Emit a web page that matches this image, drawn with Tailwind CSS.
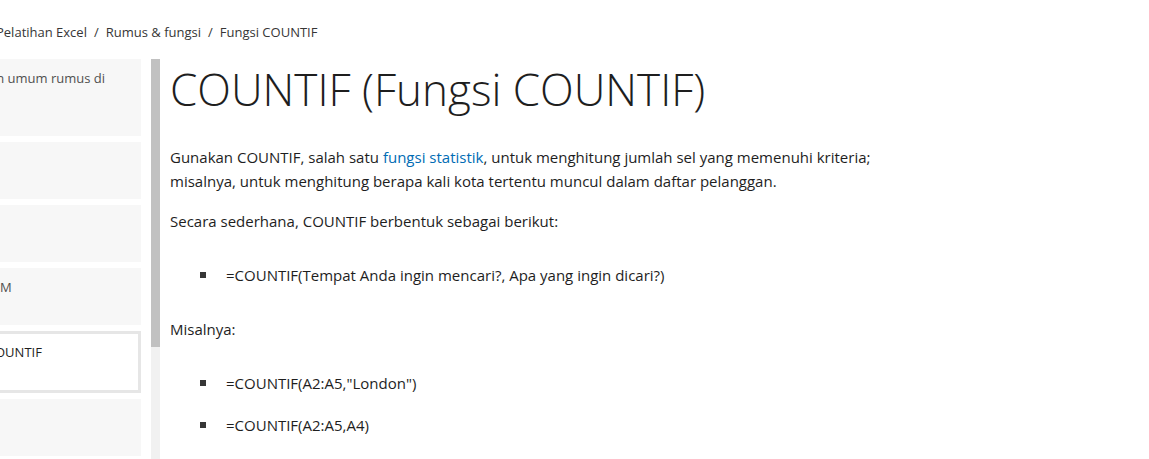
<!DOCTYPE html>
<html lang="id">
<head>
<meta charset="utf-8">
<meta name="viewport" content="width=device-width, initial-scale=1">
<title>COUNTIF (Fungsi COUNTIF)</title>
<script src="https://cdn.jsdelivr.net/npm/@tailwindcss/browser@4"></script>
</head>
<body class="flex h-screen flex-col overflow-hidden bg-white font-['Open_Sans','Noto_Sans',sans-serif] text-[15px] leading-6 text-[#1e1e1e]">
<nav aria-label="Breadcrumb" class="shrink-0 pt-[22px] pb-[17px] text-[13px] leading-5 text-[#363636]">
  <ol class="-ml-1 flex gap-[7px] whitespace-nowrap">
    <li><a href="#">Pelatihan Excel</a></li>
    <li aria-hidden="true">/</li>
    <li><a href="#">Rumus &amp; fungsi</a></li>
    <li aria-hidden="true">/</li>
    <li><a href="#" aria-current="page">Fungsi COUNTIF</a></li>
  </ol>
</nav>
<div class="flex min-h-0 flex-1">
  <aside class="flex w-40 shrink-0 justify-between overflow-hidden">
    <ul class="flex w-[141px] flex-col gap-[6px] text-[13px] leading-5 whitespace-nowrap text-[#505050]">
      <li class="h-[77px] shrink-0 bg-[#f7f7f7] pt-[9px] pr-9"><a href="#" class="flex justify-end">n umum rumus di</a></li>
      <li class="h-[57px] shrink-0 bg-[#f7f7f7]"></li>
      <li class="h-[57px] shrink-0 bg-[#f7f7f7]"></li>
      <li class="h-[57px] shrink-0 bg-[#f7f7f7] pt-[9px]"><a href="#">M</a></li>
      <li class="h-[62px] shrink-0 border-y-3 border-r-3 border-[#e6e6e6] pt-2 text-[#1e1e1e]"><a href="#" class="-ml-[5px]">OUNTIF</a></li>
      <li class="h-[57px] shrink-0 bg-[#f7f7f7]"></li>
    </ul>
    <div class="w-[9px] bg-[#f1f1f1]"><div class="h-[72%] bg-[#c1c1c1]"></div></div>
  </aside>
  <main class="min-w-0 flex-1 pl-[10px]">
    <h1 class="text-[44px] leading-[60px] font-light whitespace-nowrap">COUNTIF (Fungsi COUNTIF)</h1>
    <p class="mt-[26px] max-w-[730px]">Gunakan COUNTIF, salah satu <a href="#" class="text-[#006cb4]">fungsi statistik</a>, untuk menghitung jumlah sel yang memenuhi kriteria; <br>misalnya, untuk menghitung berapa kali kota tertentu muncul dalam daftar pelanggan.</p>
    <p class="mt-4">Secara sederhana, COUNTIF berbentuk sebagai berikut:</p>
    <ul class="mt-[30px] pl-[30px]">
      <li class="flex items-center gap-5 before:size-[6px] before:bg-[#363636]">=COUNTIF(Tempat Anda ingin mencari?, Apa yang ingin dicari?)</li>
    </ul>
    <p class="mt-[30px]">Misalnya:</p>
    <ul class="mt-[30px] flex flex-col gap-[18px] pl-[30px]">
      <li class="flex items-center gap-5 before:size-[6px] before:bg-[#363636]">=COUNTIF(A2:A5,"London")</li>
      <li class="flex items-center gap-5 before:size-[6px] before:bg-[#363636]">=COUNTIF(A2:A5,A4)</li>
    </ul>
  </main>
</div>
</body>
</html>
